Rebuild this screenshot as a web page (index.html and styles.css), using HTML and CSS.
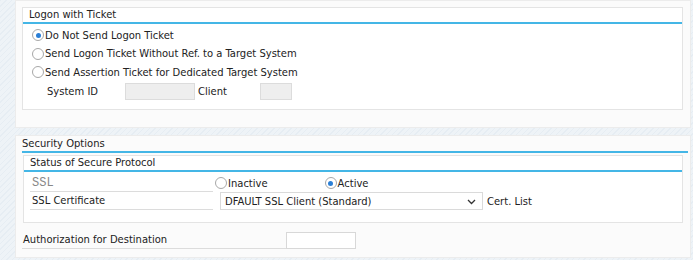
FILE: index.html
```html
<!DOCTYPE html>
<html>
<head>
<meta charset="utf-8">
<link rel="stylesheet" href="styles.css">
</head>
<body>
<div class="page">
  <section class="panel panel-first">
    <div class="group">
      <div class="group-title">Logon with Ticket</div>
      <div class="group-body">
        <label class="row radio-row"><span class="radio checked"></span>Do Not Send Logon Ticket</label>
        <label class="row radio-row"><span class="radio"></span>Send Logon Ticket Without Ref. to a Target System</label>
        <label class="row radio-row"><span class="radio"></span>Send Assertion Ticket for Dedicated Target System</label>
        <div class="row sys-row">
          <span class="lbl-sys">System ID</span>
          <span class="input disabled w-sys"></span>
          <span class="lbl-client">Client</span>
          <span class="input disabled w-client"></span>
        </div>
      </div>
    </div>
  </section>

  <section class="panel panel-second">
    <div class="panel-title">Security Options</div>
    <div class="group group-inner">
      <div class="group-title">Status of Secure Protocol</div>
      <div class="group-body body-inner">
        <div class="row">
          <span class="field-label mono">SSL</span>
          <label class="opt"><span class="radio"></span>Inactive</label>
          <label class="opt opt-active"><span class="radio checked"></span>Active</label>
        </div>
        <div class="row">
          <span class="field-label">SSL Certificate</span>
          <span class="select">DFAULT SSL Client (Standard)<svg class="chev" width="9" height="6" viewBox="0 0 9 6"><path d="M1 1 L4.5 4.5 L8 1" fill="none" stroke="#333" stroke-width="1.3"/></svg></span>
          <span class="after">Cert. List</span>
        </div>
      </div>
    </div>
    <div class="row auth-row">
      <span class="field-label auth-label">Authorization for Destination</span>
      <span class="input w-auth"></span>
    </div>
  </section>
</div>
</body>
</html>
```

FILE: styles.css
```css
html, body {
  margin: 0;
  padding: 0;
}
body {
  width: 693px;
  height: 260px;
  overflow: hidden;
  font-family: "DejaVu Sans Condensed", "DejaVu Sans", sans-serif;
  font-stretch: condensed;
  font-size: 11.1px;
  color: #222;
  background-color: #eef3f7;
  background-image: repeating-linear-gradient(135deg, #e6edf3 0, #e6edf3 1px, transparent 1px, transparent 4px);
}
.page {
  padding: 0 2px 0 15px;
}
.panel {
  background: #fbfbfb;
  border: 1px solid #ececec;
  box-sizing: border-box;
}
.panel-first {
  height: 128px;
  padding: 6px 7px 0 6px;
}
.panel-second {
  margin-top: 7px;
  height: 123px;
  padding: 0 2px 0 6px;
}
.group {
  background: #fff;
  border: 1px solid #e4e4e4;
}
.group-title {
  height: 14px;
  line-height: 14px;
  padding-left: 6px;
  border-bottom: 2px solid #44b6e6;
}
.group-body {
  padding: 2px 0 10px 9px;
  height: 73px;
}
.row {
  display: flex;
  align-items: center;
  height: 18px;
  white-space: nowrap;
}
.radio-row {
  height: 18.5px;
}
.radio {
  display: inline-block;
  width: 12px;
  height: 12px;
  border: 1px solid #a8a8a8;
  border-radius: 50%;
  background: #fff;
  box-sizing: border-box;
  margin-right: 1px;
  position: relative;
  flex: none;
}
.radio.checked::after {
  content: "";
  position: absolute;
  left: 2.5px;
  top: 2.5px;
  width: 5px;
  height: 5px;
  border-radius: 50%;
  background: #2a7fd6;
}
.sys-row {
  padding-left: 15px;
  height: 19px;
}
.lbl-sys {
  width: 78px;
}
.input {
  display: inline-block;
  height: 17px;
  box-sizing: border-box;
  border: 1px solid #d8d8d8;
  background: #fff;
}
.input.disabled {
  background: #eeeeee;
  border-color: #dcdcdc;
}
.w-sys {
  width: 70px;
}
.lbl-client {
  margin-left: 3px;
  width: 62px;
}
.w-client {
  width: 32px;
}
.panel-title {
  height: 14px;
  line-height: 14px;
  padding-top: 1px;
  border-bottom: 2px solid #44b6e6;
}
.group-inner {
  margin-top: 2px;
  margin-left: 1px;
  margin-right: 5px;
}
.body-inner {
  padding: 2px 0 10px 6px;
  height: 38px;
}
.field-label {
  width: 183px;
  box-sizing: border-box;
  padding-left: 2px;
  border-bottom: 1px solid #dcdcdc;
  height: 18px;
  line-height: 18px;
}
.mono {
  font-family: "Liberation Mono", monospace;
  font-stretch: normal;
  color: #888;
  font-size: 12px;
}
.opt {
  display: flex;
  align-items: center;
  margin-left: 2px;
}
.opt-active {
  margin-left: 57px;
}
.select {
  display: flex;
  align-items: center;
  width: 263px;
  height: 18px;
  box-sizing: border-box;
  border: 1px solid #dadada;
  background: #fff;
  padding-left: 4px;
  margin-left: 7px;
  position: relative;
}
.chev {
  position: absolute;
  right: 6px;
  top: 6px;
}
.after {
  margin-left: 4px;
}
.auth-row {
  margin-top: 8px;
}
.auth-label {
  width: 264px;
  padding-left: 1px;
}
.w-auth {
  width: 70px;
  height: 17px;
}
```
